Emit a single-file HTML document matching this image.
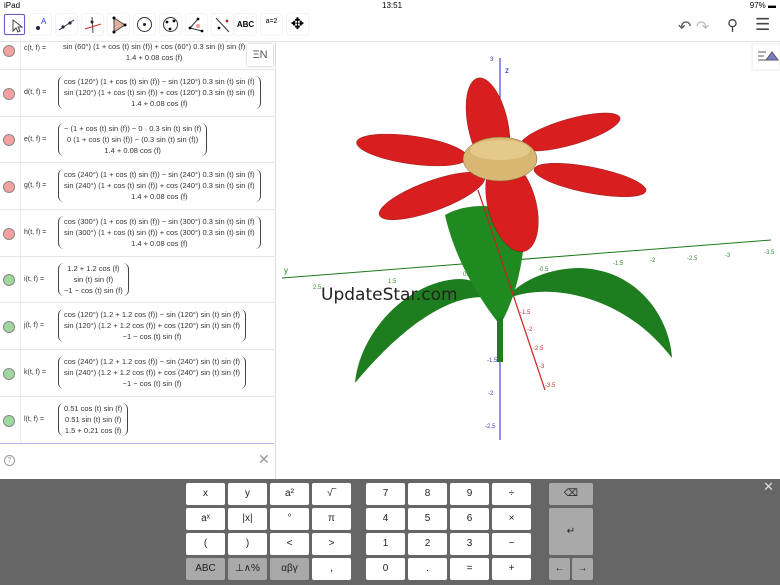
<!DOCTYPE html>
<html><head><meta charset="utf-8"><style>
*{margin:0;padding:0;box-sizing:border-box}
body{width:780px;height:585px;overflow:hidden;background:#fff;font-family:"Liberation Sans",sans-serif;position:relative}
.sb{position:absolute;top:0;left:0;width:780px;height:12px;font-size:8px;color:#000}
.tb{position:absolute;top:12px;left:0;width:780px;height:30px;background:#fff;border-bottom:1px solid #e4e4e4}
.tool{position:absolute;top:2px;width:21px;height:21px;border-radius:2px;background:#fff;box-shadow:0 0 1px #bbb}
.tool svg{position:absolute;left:0;top:0}
.alg{position:absolute;top:42px;left:0;width:276px;height:437px;border-right:1px solid #ddd;background:#fff}
.row{position:absolute;left:0;width:274px;border-bottom:1px solid #e6e6e6}
.row .dot{position:absolute;left:3px;width:12px;height:12px;border-radius:50%;border:1px solid #888}
.row .g{position:absolute;left:20px;top:0;bottom:0;border-left:1px solid #eee}
.row .lab{position:absolute;left:24px;font-size:7px;color:#333}
.row .m{position:absolute;left:58px;font-size:7.5px;color:#333;line-height:11px;text-align:center;border-left:1px solid #444;border-right:1px solid #444;border-radius:6px;padding:0 5px;white-space:nowrap}
.kb{position:absolute;top:479px;left:0;width:780px;height:106px;background:#666}
.k{position:absolute;width:39px;height:22px;background:#fff;border-radius:2px;font-size:10px;text-align:center;line-height:22px;color:#222}
.k.d{background:#a9a9a9}
</style></head><body>
<div class="sb"><span style="position:absolute;left:4px;top:1px">iPad ︎</span><span style="position:absolute;left:382px;top:1px">13:51</span><span style="position:absolute;right:4px;top:1px">97% ▬</span></div>
<div class="tb">
<div class="tool" style="left:4px;border:1px solid #6a5acd"><svg width="21" height="21"><path d="M8 5v11l3-3 2 4 2-1-2-4h4z" fill="none" stroke="#444"/></svg></div>
<div class="tool" style="left:30px"><svg width="21" height="21"><circle cx="8" cy="14" r="2" fill="#224"/><text x="11" y="10" font-size="8" fill="#33c">A</text></svg></div>
<div class="tool" style="left:56px"><svg width="21" height="21"><line x1="3" y1="16" x2="18" y2="6" stroke="#333"/><circle cx="7" cy="13" r="1.6" fill="#224"/><circle cx="14" cy="9" r="1.6" fill="#224"/></svg></div>
<div class="tool" style="left:82px"><svg width="21" height="21"><line x1="10" y1="3" x2="11" y2="19" stroke="#444"/><line x1="3" y1="15" x2="19" y2="10" stroke="#c33"/><circle cx="10" cy="8" r="1.5" fill="#224"/></svg></div>
<div class="tool" style="left:108px"><svg width="21" height="21"><path d="M6 4L17 11 6 18z" fill="#e0b0a0" stroke="#444"/><circle cx="6" cy="4" r="1.5"/><circle cx="17" cy="11" r="1.5"/><circle cx="6" cy="18" r="1.5"/></svg></div>
<div class="tool" style="left:134px"><svg width="21" height="21"><circle cx="10.5" cy="10.5" r="7" fill="none" stroke="#333"/><circle cx="10.5" cy="10.5" r="1.5" fill="#224"/></svg></div>
<div class="tool" style="left:160px"><svg width="21" height="21"><circle cx="10.5" cy="10.5" r="7" fill="none" stroke="#333"/><circle cx="7" cy="8" r="1.4"/><circle cx="14" cy="7" r="1.4"/><circle cx="10" cy="15" r="1.4"/></svg></div>
<div class="tool" style="left:186px"><svg width="21" height="21"><path d="M4 14L12 5M4 14L16 17" stroke="#333" fill="none"/><circle cx="12" cy="12" r="2" fill="#f99"/><circle cx="4" cy="14" r="1.4"/><circle cx="12" cy="5" r="1.4"/><circle cx="16" cy="17" r="1.4"/></svg></div>
<div class="tool" style="left:212px"><svg width="21" height="21"><line x1="4" y1="4" x2="17" y2="18" stroke="#333"/><circle cx="15" cy="7" r="1.4" fill="#a22"/><circle cx="7" cy="14" r="1.4"/></svg></div>
<div class="tool" style="left:235px;font-size:8px;font-weight:bold;text-align:center;line-height:21px">ABC</div>
<div class="tool" style="left:261px;font-size:7px;text-align:center;line-height:15px">a=2</div>
<div class="tool" style="left:287px;text-align:center;line-height:21px">✥</div>
<div style="position:absolute;left:678px;top:5px;font-size:16px;color:#555">↶ <span style="color:#bbb">↷</span></div>
<div style="position:absolute;left:727px;top:4px;font-size:15px;color:#444">⚲</div>
<div style="position:absolute;left:755px;top:3px;font-size:17px;color:#444">☰</div>
</div>
<div class="alg">
<div class="row" style="top:-5px;height:33px"><div class="dot" style="top:8px;background:#f7a0a0"></div><div class="g"></div><div class="lab" style="top:8px">c(t, f) =</div><div class="m" style="top:4px;border:none">sin (60°) (1 + cos (t) sin (f)) + cos (60°) 0.3 sin (t) sin (f)<br>1.4 + 0.08 cos (f)</div></div>
<div style="position:absolute;left:247px;top:2px;width:26px;height:22px;background:#fff;box-shadow:0 0 2px #aaa;font-size:11px;text-align:center;line-height:22px;color:#555">ΞN</div>
<div class="row" style="top:28px;height:47px"><div class="dot" style="top:18px;background:#f7a0a0"></div><div class="g"></div><div class="lab" style="top:19px">d(t, f) =</div><div class="m" style="top:6px">cos (120°) (1 + cos (t) sin (f)) − sin (120°) 0.3 sin (t) sin (f)<br>sin (120°) (1 + cos (t) sin (f)) + cos (120°) 0.3 sin (t) sin (f)<br>1.4 + 0.08 cos (f)</div></div>
<div class="row" style="top:75px;height:46px"><div class="dot" style="top:17px;background:#f7a0a0"></div><div class="g"></div><div class="lab" style="top:19px">e(t, f) =</div><div class="m" style="top:6px">− (1 + cos (t) sin (f)) − 0 · 0.3 sin (t) sin (f)<br>0 (1 + cos (t) sin (f)) − (0.3 sin (t) sin (f))<br>1.4 + 0.08 cos (f)</div></div>
<div class="row" style="top:121px;height:47px"><div class="dot" style="top:18px;background:#f7a0a0"></div><div class="g"></div><div class="lab" style="top:19px">g(t, f) =</div><div class="m" style="top:6px">cos (240°) (1 + cos (t) sin (f)) − sin (240°) 0.3 sin (t) sin (f)<br>sin (240°) (1 + cos (t) sin (f)) + cos (240°) 0.3 sin (t) sin (f)<br>1.4 + 0.08 cos (f)</div></div>
<div class="row" style="top:168px;height:47px"><div class="dot" style="top:18px;background:#f7a0a0"></div><div class="g"></div><div class="lab" style="top:19px">h(t, f) =</div><div class="m" style="top:6px">cos (300°) (1 + cos (t) sin (f)) − sin (300°) 0.3 sin (t) sin (f)<br>sin (300°) (1 + cos (t) sin (f)) + cos (300°) 0.3 sin (t) sin (f)<br>1.4 + 0.08 cos (f)</div></div>
<div class="row" style="top:215px;height:46px"><div class="dot" style="top:17px;background:#9fd89f"></div><div class="g"></div><div class="lab" style="top:19px">i(t, f) =</div><div class="m" style="top:6px">1.2 + 1.2 cos (f)<br>sin (t) sin (f)<br>−1 − cos (t) sin (f)</div></div>
<div class="row" style="top:261px;height:47px"><div class="dot" style="top:18px;background:#9fd89f"></div><div class="g"></div><div class="lab" style="top:19px">j(t, f) =</div><div class="m" style="top:6px">cos (120°) (1.2 + 1.2 cos (f)) − sin (120°) sin (t) sin (f)<br>sin (120°) (1.2 + 1.2 cos (f)) + cos (120°) sin (t) sin (f)<br>−1 − cos (t) sin (f)</div></div>
<div class="row" style="top:308px;height:47px"><div class="dot" style="top:18px;background:#9fd89f"></div><div class="g"></div><div class="lab" style="top:19px">k(t, f) =</div><div class="m" style="top:6px">cos (240°) (1.2 + 1.2 cos (f)) − sin (240°) sin (t) sin (f)<br>sin (240°) (1.2 + 1.2 cos (f)) + cos (240°) sin (t) sin (f)<br>−1 − cos (t) sin (f)</div></div>
<div class="row" style="top:355px;height:47px;border-bottom:1px solid #b8b0dd"><div class="dot" style="top:18px;background:#9fd89f"></div><div class="g"></div><div class="lab" style="top:19px">l(t, f) =</div><div class="m" style="top:6px">0.51 cos (t) sin (f)<br>0.51 sin (t) sin (f)<br>1.5 + 0.21 cos (f)</div></div>
<div style="position:absolute;left:4px;top:413px;width:11px;height:11px;border:1px solid #999;border-radius:50%;font-size:7px;color:#999;text-align:center;line-height:10px">?</div>
<div style="position:absolute;left:258px;top:409px;font-size:14px;color:#999">✕</div>
</div>
<svg style="position:absolute;left:277px;top:42px" width="503" height="437" viewBox="277 42 503 437">
<rect x="752" y="44" width="28" height="26" fill="#fff" stroke="#eee"/><path d="M758 52h8M758 56h6M758 60h8M766 60l6-8 6 8z" stroke="#556" fill="#7a7fc8"/>
<line x1="282" y1="278" x2="771" y2="240" stroke="#1a7a1a" stroke-width="1"/>
<text x="284" y="273" font-size="8" fill="#1a7a1a">y</text>
<g font-size="6" fill="#3a8a3a"><text x="313" y="289">2.5</text><text x="388" y="283">1.5</text><text x="463" y="276">0.5</text><text x="538" y="271">-0.5</text><text x="613" y="265">-1.5</text><text x="687" y="260">-2.5</text><text x="764" y="254">-3.5</text><text x="650" y="262">-2</text><text x="725" y="257">-3</text></g>
<line x1="500" y1="58" x2="500" y2="440" stroke="#22c" stroke-width="1"/>
<text x="505" y="73" font-size="8" fill="#22c">z</text>
<g font-size="6" fill="#44c"><text x="487" y="94">2.5</text><text x="487" y="362">-1.5</text><text x="488" y="395">-2</text><text x="485" y="428">-2.5</text><text x="490" y="61">3</text></g>
<path d="M355 383 C360 330 410 280 460 279 C480 280 495 290 497 300 C470 290 420 305 355 383Z" fill="#1e7d1e"/>
<path d="M672 358 C670 320 640 270 580 268 C550 268 520 280 505 300 C540 282 620 290 672 358Z" fill="#1e7d1e"/>
<path d="M445 215 C470 200 515 205 525 220 C525 260 515 300 500 325 C480 300 455 260 445 215Z" fill="#1f8a1f"/>
<rect x="497" y="318" width="6" height="44" fill="#1e7d1e"/>
<line x1="478" y1="190" x2="545" y2="390" stroke="#c22" stroke-width="1.2"/>
<g font-size="6" fill="#c33"><text x="520" y="314">-1.5</text><text x="527" y="331">-2</text><text x="533" y="350">-2.5</text><text x="539" y="368">-3</text><text x="545" y="387">-3.5</text></g>
<g fill="#d81e1e" stroke="#8a1010" stroke-width=".4">
<ellipse cx="412" cy="150" rx="56" ry="14" transform="rotate(8 412 150)"/>
<ellipse cx="570" cy="132" rx="52" ry="13" transform="rotate(-16 570 132)"/>
<ellipse cx="488" cy="125" rx="20" ry="48" transform="rotate(-12 488 125)"/>
<ellipse cx="432" cy="196" rx="56" ry="15" transform="rotate(-20 432 196)"/>
<ellipse cx="590" cy="180" rx="57" ry="13" transform="rotate(11 590 180)"/>
<ellipse cx="512" cy="205" rx="24" ry="48" transform="rotate(-15 512 205)"/>
</g>
<ellipse cx="500" cy="159" rx="37" ry="22" fill="#d8b772" stroke="#7a6030" stroke-width=".5"/>
<ellipse cx="500" cy="150" rx="30" ry="10" fill="#e3c98a"/>
<text x="321" y="300" font-size="17" fill="#222" font-family="DejaVu Sans, sans-serif">UpdateStar.com</text>
</svg>
<div class="kb">
<div style="position:absolute;right:6px;top:0;font-size:13px;color:#ddd">✕</div>
<div class="k" style="left:186px;top:4px">x</div><div class="k" style="left:228px;top:4px">y</div><div class="k" style="left:270px;top:4px">a²</div><div class="k" style="left:312px;top:4px">√‾</div>
<div class="k" style="left:366px;top:4px">7</div><div class="k" style="left:408px;top:4px">8</div><div class="k" style="left:450px;top:4px">9</div><div class="k" style="left:492px;top:4px">÷</div>
<div class="k d" style="left:549px;top:4px;width:44px">⌫</div>
<div class="k" style="left:186px;top:29px">aˣ</div><div class="k" style="left:228px;top:29px">|x|</div><div class="k" style="left:270px;top:29px">°</div><div class="k" style="left:312px;top:29px">π</div>
<div class="k" style="left:366px;top:29px">4</div><div class="k" style="left:408px;top:29px">5</div><div class="k" style="left:450px;top:29px">6</div><div class="k" style="left:492px;top:29px">×</div>
<div class="k d" style="left:549px;top:29px;width:44px;height:47px;line-height:47px">↵</div>
<div class="k" style="left:186px;top:54px">(</div><div class="k" style="left:228px;top:54px">)</div><div class="k" style="left:270px;top:54px">&lt;</div><div class="k" style="left:312px;top:54px">&gt;</div>
<div class="k" style="left:366px;top:54px">1</div><div class="k" style="left:408px;top:54px">2</div><div class="k" style="left:450px;top:54px">3</div><div class="k" style="left:492px;top:54px">−</div>
<div class="k d" style="left:186px;top:79px">ABC</div><div class="k d" style="left:228px;top:79px">⊥∧%</div><div class="k d" style="left:270px;top:79px">αβγ</div><div class="k" style="left:312px;top:79px">,</div>
<div class="k" style="left:366px;top:79px">0</div><div class="k" style="left:408px;top:79px">.</div><div class="k" style="left:450px;top:79px">=</div><div class="k" style="left:492px;top:79px">+</div>
<div class="k d" style="left:549px;top:79px;width:21px">←</div><div class="k d" style="left:572px;top:79px;width:21px">→</div>
</div>
</body></html>
